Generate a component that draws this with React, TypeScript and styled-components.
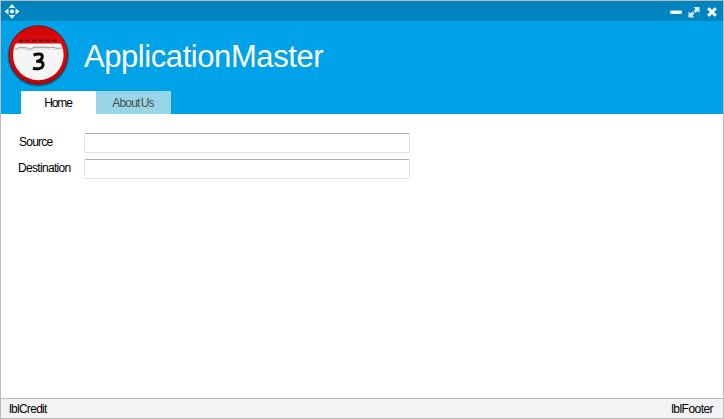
import React from "react";
import styled, { createGlobalStyle } from "styled-components";

const GlobalStyle = createGlobalStyle`
  * { box-sizing: border-box; }
  body { margin: 0; overflow: hidden; }
`;

const Window = styled.div`
  width: 724px;
  height: 419px;
  display: flex;
  flex-direction: column;
  border: 1px solid #b9b9b9;
  background: #fff;
  font-family: "Liberation Sans", Arial, sans-serif;
  font-size: 12px;
  line-height: 14px;
  color: #000;
  white-space: nowrap;
`;

const TitleBar = styled.div`
  height: 20px;
  flex: none;
  display: flex;
  justify-content: space-between;
  background: #0084bf;
`;

const Glyph = styled.svg`
  display: block;
  flex: none;
`;

const Header = styled.header`
  height: 93px;
  flex: none;
  display: flex;
  flex-direction: column;
  justify-content: space-between;
  background: #00a2e8;
`;

const Brand = styled.div`
  height: 70px;
  display: flex;
`;

const Title = styled.h1`
  margin: 18px 0 0 13px;
  font-size: 31px;
  line-height: 36px;
  font-weight: 400;
  letter-spacing: -0.43px;
  color: #fff;
`;

const Tabs = styled.nav`
  display: flex;
  padding-left: 20px;
`;

const Tab = styled.button<{ $active?: boolean; $track: number }>`
  width: 75px;
  height: 23px;
  border: 0;
  padding: 0 1px 0 0;
  font: inherit;
  letter-spacing: ${(p) => p.$track}px;
  word-spacing: -1.5px;
  color: ${(p) => (p.$active ? "#000" : "#484f52")};
  background: ${(p) => (p.$active ? "#fff" : "#97d5e7")};
`;

const Form = styled.main`
  flex: 1;
  display: flex;
  flex-direction: column;
  gap: 6px;
  padding: 19px 0 0 17px;
`;

const Field = styled.label`
  display: flex;
  align-items: center;
  height: 20px;
`;

const Caption = styled.span<{ $indent?: number; $track: number }>`
  width: 66px;
  flex: none;
  padding-left: ${(p) => p.$indent ?? 0}px;
  padding-bottom: 2px;
  letter-spacing: ${(p) => p.$track}px;
`;

const Input = styled.input`
  width: 326px;
  height: 20px;
  padding: 0 4px;
  border: 1px solid #e2e3ea;
  border-top-color: #abadb3;
  border-radius: 2px;
  outline: 0;
  background: #fff;
  font: inherit;
`;

const StatusBar = styled.footer`
  height: 20px;
  flex: none;
  display: flex;
  justify-content: space-between;
  align-items: center;
  padding: 0 10px 0 8px;
  border-top: 1px solid #b9b9b9;
  background: #f3f3f3;
`;

const Status = styled.span<{ $track: number }>`
  letter-spacing: ${(p) => p.$track}px;
`;

function MoveIcon() {
  return (
    <Glyph width="24" height="20" viewBox="1 1 24 20" fill="#e4f4fb">
      <path d="M12 4l3.300 4H8.700zM12 19l3.300-4H8.700zM4.500 11.500l4-3.300v6.600zM19.500 11.500l-4-3.300v6.600z" />
      <circle cx="12" cy="11.500" r="2.100" />
    </Glyph>
  );
}

function WindowControls() {
  return (
    <Glyph width="59" height="20" viewBox="664 1 59 20">
      <rect x="670" y="10.500" width="12" height="3.400" rx="1.300" fill="#f4fbfe" />
      <g fill="#d5edf7">
        <path d="M693.500 7h6v6l-2-2-2 2-2-2 2-2z" />
        <path d="M694.500 17.500h-6v-6l2 2 2-2 2 2-2 2z" />
      </g>
      <path d="M708.200 8.200l7.600 7.600M715.800 8.200l-7.600 7.600" stroke="#fff" strokeWidth="3" />
    </Glyph>
  );
}

function CalendarLogo() {
  return (
    <Glyph width="70" height="70" viewBox="1 21 70 70">
      <defs>
        <linearGradient id="red" x1="0" y1="0" x2="0" y2="1">
          <stop offset="0" stopColor="#c90708" />
          <stop offset=".28" stopColor="#df090b" />
          <stop offset="1" stopColor="#bd0507" />
        </linearGradient>
        <radialGradient id="shade">
          <stop offset=".88" stopColor="#08334a" stopOpacity=".9" />
          <stop offset="1" stopColor="#08334a" stopOpacity="0" />
        </radialGradient>
        <clipPath id="page">
          <circle cx="38.300" cy="55" r="25.300" />
        </clipPath>
      </defs>
      <circle cx="38.300" cy="56" r="31.500" fill="url(#shade)" />
      <circle cx="38.300" cy="55" r="29.300" fill="url(#red)" stroke="#810b0c" strokeWidth=".8" />
      <g clipPath="url(#page)">
        <path d="M10 43.500h57V82H10z" fill="#f5f5f5" />
        <path d="M15 49l5-1.500 7 .3 3 1.700 4-2 9-.3 6 .5 4-.5 4 1.200 6-.3" fill="none" stroke="#adadad" strokeWidth="1.300" />
        <path d="M16 50.500l5-1.500 5 .3 3 1.700 5-2 9-.2 7 .5 9 .5" fill="none" stroke="#ddd" />
      </g>
      <path d="M19 40.500h39" stroke="#370405" strokeWidth="1.300" strokeDasharray="4 2.700" />
      <path
        d="M33.500 55C37 53.800 42.300 52.800 42.300 56.400C42.300 59.500 39 60.900 36.300 61.400C41 60.900 43.400 62.400 43 65.300C42.200 69 37.500 69.500 33 68.200"
        fill="none"
        stroke="#080808"
        strokeWidth="3"
      />
    </Glyph>
  );
}

export default function App() {
  return (
    <>
      <GlobalStyle />
      <Window>
        <TitleBar>
          <MoveIcon />
          <WindowControls />
        </TitleBar>
        <Header>
          <Brand>
            <CalendarLogo />
            <Title>ApplicationMaster</Title>
          </Brand>
          <Tabs>
            <Tab $active $track={-1.1}>Home</Tab>
            <Tab $track={-0.8}>About Us</Tab>
          </Tabs>
        </Header>
        <Form>
          <Field>
            <Caption $indent={1} $track={-0.75}>Source</Caption>
            <Input />
          </Field>
          <Field>
            <Caption $track={-0.68}>Destination</Caption>
            <Input />
          </Field>
        </Form>
        <StatusBar>
          <Status $track={-0.7}>lblCredit</Status>
          <Status $track={-0.55}>lblFooter</Status>
        </StatusBar>
      </Window>
    </>
  );
}
